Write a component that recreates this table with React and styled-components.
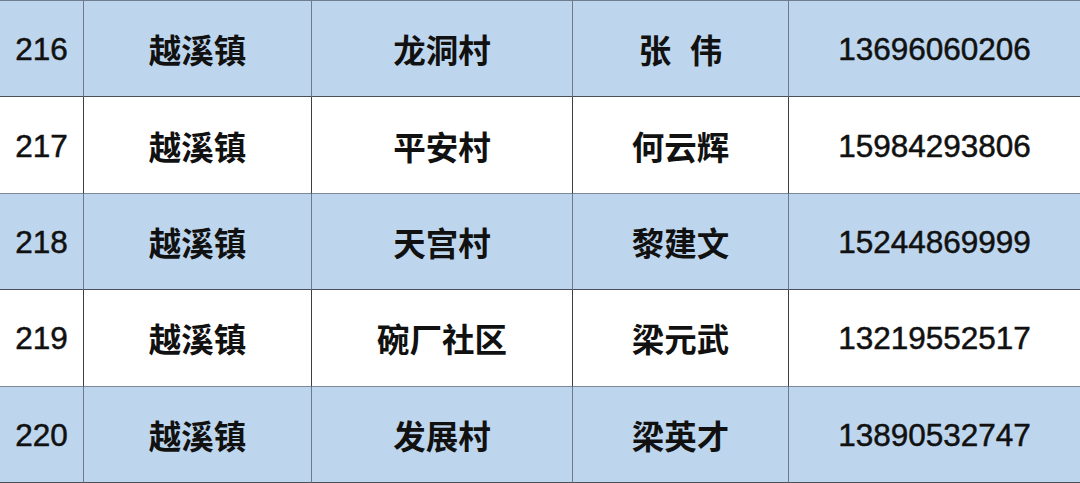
import React from 'react';
import styled, { createGlobalStyle } from 'styled-components';

const GlobalStyle = createGlobalStyle`
    html, body {
        margin: 0;
        padding: 0;
        background: #fff;
    }
`

const Table = styled.div`
    width: 1080px;
    height: 483px;
    display: grid;
    grid-template-columns: 83px 228px 261px 216px 1fr;
    grid-template-rows: repeat(5, 1fr);
    border-top: 1px solid #6f7d8e;
    box-sizing: border-box;
    overflow: hidden;
`

const Cell = styled.div`
    display: flex;
    align-items: center;
    justify-content: center;
    background: ${props => props.shade ? '#bed6ed' : '#ffffff'};
    border-bottom: 1px solid ${props => props.shade ? '#4a4f58' : '#7d8898'};
    border-left: ${props => props.first ? 'none' : `1px solid ${props.shade ? '#6d7a8c' : '#3c3f45'}`};
    color: #111;
    font-size: ${props => props.num ? '31.5px' : '32.5px'};
    font-family: ${props => props.num ? '"Liberation Sans", Arial, sans-serif' : '"Noto Sans CJK SC", sans-serif'};
    font-weight: ${props => props.num ? 400 : 700};
    -webkit-text-stroke: ${props => props.num ? '0.5px #111' : '0'};
    white-space: pre;
    padding-top: ${props => props.num ? '2px' : '0'};
    box-sizing: border-box;
`

const rows = [
    ['216', '越溪镇', '龙洞村', '张\u2002\u200a伟', '13696060206'],
    ['217', '越溪镇', '平安村', '何云辉', '15984293806'],
    ['218', '越溪镇', '天宫村', '黎建文', '15244869999'],
    ['219', '越溪镇', '碗厂社区', '梁元武', '13219552517'],
    ['220', '越溪镇', '发展村', '梁英才', '13890532747'],
]

const App = () => {
    return (
        <>
            <GlobalStyle />
            <Table>
                {rows.map((row, r) => row.map((text, c) => (
                    <Cell
                        key={`${r}-${c}`}
                        shade={r % 2 === 0}
                        first={c === 0}
                        num={c === 0 || c === 4}
                    >
                        {text}
                    </Cell>
                )))}
            </Table>
        </>
    )
}

export default App;
